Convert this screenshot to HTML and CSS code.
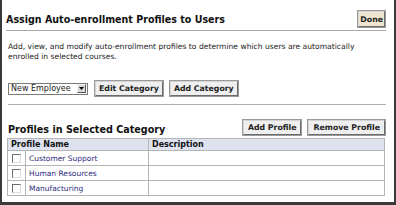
FILE: index.html
```html
<!DOCTYPE html>
<html>
<head>
<meta charset="utf-8">
<link rel="stylesheet" href="styles.css">
</head>
<body>
<div class="frame">
  <div class="header">
    <h1 class="title">Assign Auto-enrollment Profiles to Users</h1>
    <button class="btn btn-done">Done</button>
  </div>
  <p class="desc">Add, view, and modify auto-enrollment profiles to determine which users are automatically enrolled in selected courses.</p>
  <div class="catrow">
    <div class="select"><span class="sel-text">New Employee</span><span class="sel-arrow"><svg width="7" height="7" viewBox="0 0 7 7"><path d="M1 2 L6 2 L3.5 5 Z" fill="#000"/></svg></span></div>
    <button class="btn btn-cat">Edit Category</button>
    <button class="btn btn-cat">Add Category</button>
  </div>
  <div class="sep"></div>
  <div class="sechead">
    <h2 class="subtitle">Profiles in Selected Category</h2>
    <div class="actions">
      <button class="btn">Add Profile</button>
      <button class="btn">Remove Profile</button>
    </div>
  </div>
  <table class="grid">
    <thead>
      <tr><th colspan="2">Profile Name</th><th>Description</th></tr>
    </thead>
    <tbody>
      <tr><td class="cb"><span class="box"></span></td><td class="name">Customer Support</td><td></td></tr>
      <tr><td class="cb"><span class="box"></span></td><td class="name">Human Resources</td><td></td></tr>
      <tr><td class="cb"><span class="box"></span></td><td class="name">Manufacturing</td><td></td></tr>
    </tbody>
  </table>
</div>
</body>
</html>
```

FILE: styles.css
```css
html, body {
  margin: 0;
  padding: 0;
  background: #ffffff;
}
body {
  width: 396px;
  height: 205px;
  overflow: hidden;
  font-family: "DejaVu Sans", Verdana, sans-serif;
}
.frame {
  box-sizing: border-box;
  width: 396px;
  height: 205px;
  border-left: 2px solid #3a3a3a;
  border-right: 2px solid #3a3a3a;
  border-bottom: 3px solid #3a3a3a;
  padding: 0 8px 0 4px;
}
.header {
  display: flex;
  align-items: center;
  justify-content: space-between;
  height: 31px;
  border-bottom: 1px solid #a8a8a8;
  padding-top: 8px;
  box-sizing: border-box;
}
.title {
  margin: 0;
  font-family: "DejaVu Sans Condensed", "DejaVu Sans", sans-serif;
  font-size: 10.6px;
  font-weight: bold;
  color: #111;
}
.btn {
  font-family: "DejaVu Sans", Verdana, sans-serif;
  font-size: 7.8px;
  font-weight: bold;
  color: #222;
  background: #efefef;
  border: 1px solid;
  border-color: #d4d4d4 #6b6b6b #6b6b6b #d4d4d4;
  outline: 1px solid #9a9a9a;
  padding: 0 4px;
  height: 15px;
  margin: 0;
  line-height: 13px;
}
.btn-cat {
  padding: 0 3px;
}
.btn-done {
  background: #efe6cf;
  height: 16px;
  padding: 0 1px;
  margin-right: 1px;
}
.desc {
  margin: 11px 0 0 2px;
  width: 364px;
  font-size: 7.6px;
  line-height: 10px;
  color: #222;
}
.catrow {
  display: flex;
  align-items: center;
  gap: 7px;
  margin: 19px 0 0 2px;
  height: 15px;
}
.select {
  display: flex;
  align-items: center;
  height: 12px;
  width: 80px;
  border: 1px solid #7a7a7a;
  box-sizing: border-box;
  font-size: 8px;
  color: #222;
}
.sel-text {
  flex: 1;
  padding-left: 2px;
  line-height: 10px;
}
.sel-arrow {
  width: 9px;
  height: 9px;
  margin-right: 1px;
  background: #d8d8d8;
  border: 1px solid;
  border-color: #f5f5f5 #555 #555 #f5f5f5;
  box-sizing: border-box;
  display: flex;
  align-items: center;
  justify-content: center;
}
.sep {
  height: 0;
  border-top: 1px solid #b0b0b0;
  margin: 8px 0 0 2px;
}
.sechead {
  display: flex;
  align-items: center;
  justify-content: space-between;
  margin: 15px 0 0 2px;
  height: 15px;
}
.subtitle {
  margin: 3px 0 0 0;
  font-family: "DejaVu Sans Condensed", "DejaVu Sans", sans-serif;
  font-size: 10.7px;
  font-weight: bold;
  color: #111;
}
.actions {
  display: flex;
  gap: 7px;
  margin-right: 1px;
}
.grid {
  border-collapse: collapse;
  width: 378px;
  margin: 3px 0 0 1px;
  font-size: 7.5px;
  border: 1px solid #b5b5b5;
}
.grid th {
  background: #dfe2ef;
  text-align: left;
  font-weight: bold;
  color: #111;
  height: 11px;
  padding: 0 0 0 3px;
  border: 1px solid #b5b5b5;
  font-size: 8px;
}
.grid td {
  height: 14px;
  border: 1px solid #b5b5b5;
  padding: 0 0 0 3px;
}
.grid td.cb {
  width: 13px;
  padding: 0 0 0 4px;
}
.grid td.name {
  width: 119px;
  color: #2b2b7a;
}
.box {
  display: block;
  width: 7px;
  height: 7px;
  border: 1px solid;
  border-color: #6e6e6e #dcdcdc #dcdcdc #6e6e6e;
  background: #fff;
}
```
